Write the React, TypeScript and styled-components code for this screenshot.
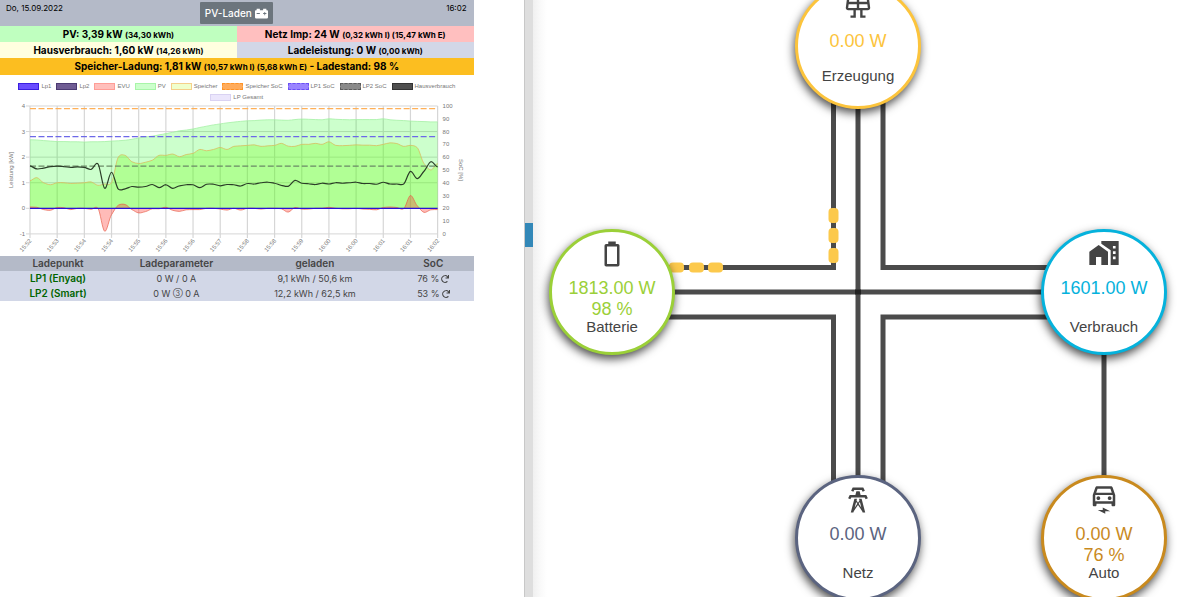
import React from 'react';
import styled, { createGlobalStyle } from 'styled-components';
import { FaCarBattery, FaRedo } from 'react-icons/fa';

const GlobalStyle = createGlobalStyle`
  *, *::before, *::after { box-sizing: border-box; }
  body { margin: 0; background: #fff; }
`;

/* ---------- page ---------- */

const Page = styled.div`
  display: flex;
  height: 100vh;
  overflow: hidden;
  color: #000;
  font-family: Inter, 'Liberation Sans', sans-serif;
`;

const LeftPane = styled.main`
  flex: 0 0 43.75%;
  padding-right: 4.2%;
  border-right: 1px solid #c8c8c8;
`;

const Divider = styled.div`
  flex: 0 0 8px;
  display: flex;
  flex-direction: column;
  padding-top: 223px;
  background: #dedede;
`;

const DragHandle = styled.button`
  height: 24px;
  width: 100%;
  padding: 0;
  border: 0;
  background: #3388b8;
  cursor: col-resize;
`;

const RightPane = styled.section`
  flex: 1 1 0;
  min-width: 0;
  overflow: hidden;
  padding-right: 17px;
  background: linear-gradient(to right, #f0f0f0, #fafafa 8px, #fff 14px);
  font-family: 'Liberation Sans', Arial, sans-serif;
`;

/* ---------- status header ---------- */

const TopBar = styled.header`
  display: grid;
  grid-template-columns: 1fr auto 1fr;
  height: 26px;
  padding: 2px 7px 0 6px;
  background: #b4bac8;
  font-size: 8px;
  line-height: 13px;
`;

const Clock = styled.time`
  text-align: right;
`;

const ModeButton = styled.button`
  display: flex;
  align-items: center;
  gap: 3px;
  height: 22px;
  padding: 0 5px;
  border: 0;
  border-radius: 1px;
  background: #6c757d;
  color: #fff;
  font: 500 10px Inter, 'Liberation Sans', sans-serif;
`;

const Stats = styled.div`
  display: grid;
  grid-template-columns: 1fr 1fr;
`;

const Stat = styled.div<{ $bg: string; $wide?: boolean }>`
  grid-column: ${(p) => (p.$wide ? '1 / -1' : 'auto')};
  height: ${(p) => (p.$wide ? 17 : 16)}px;
  background: ${(p) => p.$bg};
  font-size: 10px;
  font-weight: 700;
  line-height: 17px;
  text-align: center;
  white-space: nowrap;
`;

const Small = styled.span`
  font-size: 8px;
`;

/* ---------- chart ---------- */

const ChartBox = styled.section`
  padding-top: 8px;
  font-family: 'Liberation Sans', Arial, sans-serif;
`;

const Legend = styled.ul`
  display: flex;
  flex-wrap: wrap;
  justify-content: center;
  gap: 4px 5px;
  margin: 0;
  padding: 0 16px;
  list-style: none;
  color: #777;
  font-size: 6px;
  line-height: 7px;
`;

const LegendItem = styled.li`
  display: flex;
  gap: 2px;
`;

const Swatch = styled.span<{ $fill: string; $line: string; $dashed?: boolean }>`
  width: 21px;
  height: 7px;
  border: 1px ${(p) => (p.$dashed ? 'dashed' : 'solid')} ${(p) => p.$line};
  background: ${(p) => p.$fill};
`;

const Plot = styled.svg`
  display: block;
  width: 100%;
  height: auto;
`;

const legend = [
  { label: 'Lp1', fill: '#6a4dff', line: '#3a1fe0' },
  { label: 'Lp2', fill: '#6f5c93', line: '#4b3a72' },
  { label: 'EVU', fill: '#ffbfbb', line: '#ff9d96' },
  { label: 'PV', fill: '#ccffcc', line: '#a8f5a8' },
  { label: 'Speicher', fill: '#f0ffcc', line: '#f5d08a' },
  { label: 'Speicher SoC', fill: '#ffac5c', line: '#ff9326', dashed: true },
  { label: 'LP1 SoC', fill: '#9a84ff', line: '#6a50f5', dashed: true },
  { label: 'LP2 SoC', fill: '#8a8a8a', line: '#5c5c5c', dashed: true },
  { label: 'Hausverbrauch', fill: '#4f4f4f', line: '#333' },
  { label: 'LP Gesamt', fill: '#ebe6fc', line: '#d9d2f2' },
];

const times = [
  '15:52', '15:53', '15:54', '15:54', '15:55', '15:56', '15:56', '15:57',
  '15:58', '15:58', '15:59', '16:00', '16:00', '16:01', '16:01', '16:02',
];

const house = [
  1.66, 1.54, 1.57, 1.63, 1.65, 1.63, 1.6, 1.62, 1.6, 1.52, 1.74, 0.78, 1.41, 0.75, 0.76, 0.85,
  0.83, 0.85, 0.93, 0.81, 0.92, 0.78, 0.88, 0.92, 0.92, 0.81, 0.94, 0.94, 0.88, 0.93, 0.92, 0.87,
  0.97, 0.95, 1.0, 1.02, 0.98, 0.9, 0.86, 1.09, 0.98, 0.96, 0.93, 0.98, 0.95, 1.0, 0.98, 1.0,
  1.02, 0.97, 0.97, 0.94, 1.02, 0.95, 0.95, 0.95, 1.44, 1.16, 1.45, 1.82, 1.62,
];

const pv = [
  2.68, 2.67, 2.65, 2.63, 2.61, 2.61, 2.6, 2.6, 2.59, 2.6, 2.6, 2.61, 2.63, 2.64, 2.66, 2.7,
  2.75, 2.79, 2.82, 2.87, 2.92, 2.97, 3.03, 3.06, 3.1, 3.16, 3.21, 3.26, 3.3, 3.34, 3.37, 3.4,
  3.42, 3.43, 3.45, 3.46, 3.46, 3.45, 3.44, 3.47, 3.49, 3.48, 3.47, 3.46, 3.5, 3.48, 3.47, 3.46,
  3.47, 3.47, 3.47, 3.47, 3.5, 3.46, 3.44, 3.43, 3.41, 3.4, 3.39, 3.38, 3.38,
];

const storage = [
  1.08, 1.2, 1.0, 0.92, 1.0, 1.0, 0.97, 0.98, 1.0, 1.03, 0.9, 0.95, 1.0, 2.0, 2.07, 1.82,
  1.75, 1.8, 1.88, 2.07, 2.07, 2.12, 2.02, 2.1, 2.15, 2.3, 2.25, 2.3, 2.38, 2.3, 2.42, 2.44,
  2.46, 2.48, 2.42, 2.44, 2.46, 2.54, 2.43, 2.42, 2.5, 2.5, 2.54, 2.5, 2.6, 2.46, 2.45, 2.46,
  2.48, 2.47, 2.47, 2.45, 2.5, 2.56, 2.53, 2.42, 2.46, 2.37, 1.75, 1.5, 1.75,
];

const grid = [
  0.05, 0.04, -0.05, -0.08, 0.03, 0.02, -0.05, 0, 0, -0.04, 0, -0.9, -0.25, 0.12, 0.15, -0.05,
  -0.18, -0.13, -0.02, -0.02, 0.04, -0.08, -0.12, -0.06, -0.05, -0.05, 0, 0, -0.03, -0.07, 0, -0.07,
  0, 0, -0.03, 0, 0, -0.02, -0.15, 0.03, -0.03, -0.03, 0, 0, 0.04, 0, -0.02, -0.02,
  0, -0.03, -0.04, -0.06, 0.03, 0.05, 0.03, -0.02, 0.5, 0.1, -0.16, -0.06, -0.05,
];

const LEFT = 30;
const RIGHT = 438;
const TOP = 5;
const UNIT = 25.6;
const BOTTOM = TOP + 5 * UNIT;
const xAt = (i: number) => LEFT + (i * (RIGHT - LEFT)) / 60;
const yAt = (kw: number) => TOP + (4 - kw) * UNIT;
const ySoc = (soc: number) => BOTTOM - (soc / 100) * 5 * UNIT;

function curve(values: number[]): string {
  const at = (i: number) => values[Math.max(0, Math.min(values.length - 1, i))];
  let d = `M${xAt(0)},${yAt(values[0]).toFixed(1)}`;
  for (let i = 0; i < values.length - 1; i++) {
    const step = xAt(i + 1) - xAt(i);
    const c1 = at(i) + (at(i + 1) - at(i - 1)) / 8;
    const c2 = at(i + 1) - (at(i + 2) - at(i)) / 8;
    d += `C${(xAt(i) + step / 3).toFixed(1)},${yAt(c1).toFixed(1)} ${(xAt(i + 1) - step / 3).toFixed(1)},${yAt(c2).toFixed(1)} ${xAt(i + 1).toFixed(1)},${yAt(at(i + 1)).toFixed(1)}`;
  }
  return d;
}

const area = (values: number[]) => `${curve(values)}L${RIGHT},${yAt(0)}L${LEFT},${yAt(0)}Z`;

function PowerChart() {
  return (
    <ChartBox aria-label="Leistungsverlauf">
      <Legend>
        {legend.map((l) => (
          <LegendItem key={l.label}>
            <Swatch $fill={l.fill} $line={l.line} $dashed={l.dashed} />
            {l.label}
          </LegendItem>
        ))}
      </Legend>
      <Plot viewBox="0 0 474 155" fontSize="6" fill="#777">
        <g stroke="#d6d6d6" strokeWidth="1">
          {[4, 3, 2, 1, 0, -1].map((v) => (
            <line key={v} x1={LEFT - 4} x2={RIGHT} y1={yAt(v)} y2={yAt(v)} />
          ))}
          {times.map((_, i) => (
            <line key={i} x1={xAt(i * 4)} x2={xAt(i * 4)} y1={TOP} y2={BOTTOM + 4} strokeWidth="1.2" />
          ))}
        </g>
        <path d={area(pv)} fill="rgba(0,255,0,0.2)" />
        <path d={curve(pv)} fill="none" stroke="#a5f0a5" strokeWidth="0.8" />
        <path d={area(storage)} fill="rgba(121,255,34,0.32)" />
        <path d={curve(storage)} fill="none" stroke="#d9bd5f" strokeWidth="0.8" />
        <path d={area(grid)} fill="rgba(255,50,40,0.33)" />
        <path d={curve(grid)} fill="none" stroke="#e8604c" strokeWidth="0.7" />
        <g strokeWidth="1.2" strokeDasharray="6 2.5">
          <line x1={LEFT} x2={RIGHT} y1={ySoc(98)} y2={ySoc(98)} stroke="#ffb057" />
          <line x1={LEFT} x2={RIGHT} y1={ySoc(76)} y2={ySoc(76)} stroke="#6d68e8" />
          <line x1={LEFT} x2={RIGHT} y1={ySoc(53)} y2={ySoc(53)} stroke="#6b8a66" />
        </g>
        <path d={curve(house)} fill="none" stroke="#2b3d28" strokeWidth="1.2" />
        <line x1={LEFT} x2={RIGHT} y1={yAt(0)} y2={yAt(0)} stroke="#2a12d6" strokeWidth="1.3" />
        <g textAnchor="end">
          {[4, 3, 2, 1, 0, -1].map((v) => (
            <text key={v} x={LEFT - 5} y={yAt(v) + 2}>{v}</text>
          ))}
          {times.map((t, i) => (
            <text key={i} transform={`translate(${xAt(i * 4) + 2} ${BOTTOM + 7}) rotate(-50)`}>{t}</text>
          ))}
        </g>
        {[0, 10, 20, 30, 40, 50, 60, 70, 80, 90, 100].map((v) => (
          <text key={v} x={RIGHT + 5} y={ySoc(v) + 2}>{v}</text>
        ))}
        <g textAnchor="middle">
          <text transform="translate(13 69) rotate(-90)">Leistung [kW]</text>
          <text transform="translate(459 69) rotate(90)">SoC [%]</text>
        </g>
      </Plot>
    </ChartBox>
  );
}

/* ---------- charge point table ---------- */

const ChargeTable = styled.table`
  width: 100%;
  table-layout: fixed;
  border-collapse: collapse;
  background: #d2d7e7;
  color: #444;
  font-size: 9px;
  line-height: 15px;
  text-align: center;
`;

const HeadRow = styled.tr`
  background: #b4bac8;
`;

const Cell = styled.td`
  height: 15px;
  padding: 0;
  white-space: nowrap;
`;

const HeadCell = styled.th`
  height: 15px;
  padding: 0;
  font-size: 10px;
  font-weight: 600;
  white-space: nowrap;
`;

const NameCell = styled(HeadCell)`
  color: #006400;
`;

const Phases = styled.span`
  font-size: 7px;
  line-height: 9px;
  vertical-align: 1px;
`;

const RefreshButton = styled.button`
  margin: 0 0 0 2px;
  padding: 0;
  border: 0;
  background: none;
  color: #444;
  font-size: 8px;
  line-height: 8px;
  vertical-align: -1px;
`;

const chargePoints = [
  { name: 'LP1 (Enyaq)', params: '0 W / 0 A', loaded: '9,1 kWh / 50,6 km', soc: '76 %' },
  {
    name: 'LP2 (Smart)',
    params: <>0 W <Phases>③</Phases> 0 A</>,
    loaded: '12,2 kWh / 62,5 km',
    soc: '53 %',
  },
];

/* ---------- energy flow diagram ---------- */

const Flow = styled.div`
  position: relative;
  width: 618px;
  height: 618px;
  margin: -17px auto 0;
`;

const FlowLines = styled.svg`
  display: block;
  width: 618px;
  height: 618px;
`;

const Node = styled.article<{ $x: number; $y: number; $color: string }>`
  position: absolute;
  left: ${(p) => p.$x}px;
  top: ${(p) => p.$y}px;
  display: flex;
  flex-direction: column;
  align-items: center;
  width: 126px;
  height: 126px;
  padding-top: 7px;
  border: 3px solid ${(p) => p.$color};
  border-radius: 50%;
  background: #fff;
  box-shadow: -1px 4px 10px rgba(0, 0, 0, 0.7);
  color: #444;
`;

const Values = styled.div<{ $color: string; $compact?: boolean }>`
  height: ${(p) => (p.$compact ? 36 : 40)}px;
  margin-top: ${(p) => (p.$compact ? 8 : 9)}px;
  color: ${(p) => p.$color};
  font-size: 18px;
  line-height: 21px;
  text-align: center;
`;

const NodeName = styled.div`
  font-size: 15px;
  line-height: 17px;
`;

const NodeIcon = styled.svg`
  display: block;
  flex: none;
  width: 30px;
  height: 30px;
  fill: currentColor;
`;

const SolarIcon = () => (
  <NodeIcon viewBox="0 0 24 24">
    <path
      d="M4.400 2.500h15.200l1.200 9.300a1 1 0 0 1-1 1.100H4.200a1 1 0 0 1-1-1.100zM12 2.500V13M3.500 8h17M9.300 13v5.900H6M14.700 13v5.900H18"
      fill="none"
      stroke="currentColor"
      strokeWidth="1.900"
    />
  </NodeIcon>
);

const BatteryIcon = () => (
  <NodeIcon viewBox="0 0 24 24">
    <path d="M16,20H8V6H16M16.67,4H15V2H9V4H7.33A1.33,1.33 0 0,0 6,5.33V20.67C6,21.4 6.6,22 7.33,22H16.67A1.33,1.33 0 0,0 18,20.67V5.33C18,4.6 17.4,4 16.67,4Z" />
  </NodeIcon>
);

const HomeIcon = () => (
  <NodeIcon viewBox="0.75 1.5 22.5 22.5" fillRule="evenodd">
    <path d="M1 11v10h5v-6h4v6h5V11L8 6z" />
    <path d="M10 3v1.970l7 5V21h6V3zM18.700 6.700h2v2h-2zM18.700 10.700h2v2h-2zM18.700 14.700h2v2h-2z" />
  </NodeIcon>
);

const TowerIcon = () => (
  <NodeIcon viewBox="0 0 24 24">
    <path d="M8.28,5.45L6.5,4.55L7.76,2H16.23L17.5,4.55L15.72,5.44L15,4H9L8.28,5.45M18.62,8H14.09L13.3,5H10.7L9.91,8H5.38L4.1,10.55L5.89,11.44L6.62,10H17.38L18.1,11.45L19.89,10.56L18.62,8M17.77,22H15.7L15.46,21.1L12,15.9L8.53,21.1L8.3,22H6.23L9.12,11H11.19L10.83,12.35L12,14.1L13.16,12.35L12.81,11H14.88L17.77,22M11.4,15L10.5,13.65L9.32,18.13L11.4,15M14.68,18.12L13.5,13.64L12.6,15L14.68,18.12Z" />
  </NodeIcon>
);

const CarIcon = () => (
  <NodeIcon viewBox="0 0 24 24">
    <path d="M18.92 2C18.72 1.42 18.16 1 17.5 1H6.5C5.84 1 5.29 1.42 5.08 2L3 8V16C3 16.55 3.45 17 4 17H5C5.55 17 6 16.55 6 16V15H18V16C18 16.55 18.45 17 19 17H20C20.55 17 21 16.55 21 16V8L18.92 2M6.85 3H17.14L18.22 6.11H5.77L6.85 3M19 13H5V8H19V13M7.5 9C8.33 9 9 9.67 9 10.5S8.33 12 7.5 12 6 11.33 6 10.5 6.67 9 7.5 9M16.5 9C17.33 9 18 9.67 18 10.5S17.33 12 16.5 12C15.67 12 15 11.33 15 10.5S15.67 9 16.5 9M7 20H11V18L17 21H13V23L7 20Z" />
  </NodeIcon>
);

const nodes = [
  { name: 'Erzeugung', x: 246, y: 0, color: '#fcc43c', values: ['0.00 W'], Icon: SolarIcon, compact: true },
  { name: 'Batterie', x: 0, y: 246, color: '#9bd038', values: ['1813.00 W', '98 %'], Icon: BatteryIcon },
  { name: 'Verbrauch', x: 492, y: 246, color: '#05b2dc', values: ['1601.00 W'], Icon: HomeIcon },
  { name: 'Netz', x: 246, y: 492, color: '#5b6480', values: ['0.00 W'], Icon: TowerIcon },
  { name: 'Auto', x: 492, y: 492, color: '#c98a1e', values: ['0.00 W', '76 %'], Icon: CarIcon },
];

function EnergyFlow() {
  return (
    <Flow>
      <FlowLines viewBox="0 0 618 618" fill="none">
        <g stroke="#4b4b4b" strokeWidth="5">
          <path d="M63 284.500H284.500V63" />
          <path d="M555 284.500H334V63" />
          <path d="M63 334H284.500V555" />
          <path d="M555 334H334V555" />
          <path d="M63 309H555M309 63V555M555 309V555" />
        </g>
        <path d="M306 309h6" stroke="#222" strokeWidth="5" />
        <g fill="#fcc94c">
          {[120, 140, 159].map((x) => (
            <rect key={x} x={x} y="279.500" width="15" height="10" rx="4" />
          ))}
          {[225, 245, 265].map((y) => (
            <rect key={y} x="279.500" y={y} width="10" height="15" rx="4" />
          ))}
        </g>
      </FlowLines>
      {nodes.map(({ name, x, y, color, values, Icon, compact }) => (
        <Node key={name} $x={x} $y={y} $color={color}>
          <Icon />
          <Values $color={color} $compact={compact}>
            {values.map((v) => (
              <div key={v}>{v}</div>
            ))}
          </Values>
          <NodeName>{name}</NodeName>
        </Node>
      ))}
    </Flow>
  );
}

export default function App() {
  return (
    <Page>
      <GlobalStyle />
      <LeftPane>
        <TopBar>
          <time>Do, 15.09.2022</time>
          <ModeButton type="button">
            PV-Laden <FaCarBattery size={13} />
          </ModeButton>
          <Clock>16:02</Clock>
        </TopBar>
        <Stats>
          <Stat $bg="#bfffbf">PV: 3,39 kW <Small>(34,30 kWh)</Small></Stat>
          <Stat $bg="#ffbfbf">Netz Imp: 24 W <Small>(0,32 kWh I) (15,47 kWh E)</Small></Stat>
          <Stat $bg="#ffffdf">Hausverbrauch: 1,60 kW <Small>(14,26 kWh)</Small></Stat>
          <Stat $bg="#d2d7e7">Ladeleistung: 0 W <Small>(0,00 kWh)</Small></Stat>
          <Stat $bg="#fcbe20" $wide>
            Speicher-Ladung: 1,81 kW <Small>(10,57 kWh I) (5,68 kWh E)</Small> - Ladestand: 98 %
          </Stat>
        </Stats>
        <PowerChart />
        <ChargeTable>
          <colgroup>
            <col width="24.5%" />
            <col width="25.5%" />
            <col width="33%" />
            <col width="17%" />
          </colgroup>
          <thead>
            <HeadRow>
              <HeadCell>Ladepunkt</HeadCell>
              <HeadCell>Ladeparameter</HeadCell>
              <HeadCell>geladen</HeadCell>
              <HeadCell>SoC</HeadCell>
            </HeadRow>
          </thead>
          <tbody>
            {chargePoints.map((c) => (
              <tr key={c.name}>
                <NameCell>{c.name}</NameCell>
                <Cell>{c.params}</Cell>
                <Cell>{c.loaded}</Cell>
                <Cell>
                  {c.soc}
                  <RefreshButton type="button" aria-label={`SoC ${c.name} aktualisieren`}>
                    <FaRedo />
                  </RefreshButton>
                </Cell>
              </tr>
            ))}
          </tbody>
        </ChargeTable>
      </LeftPane>
      <Divider>
        <DragHandle type="button" aria-label="Bereich verschieben" />
      </Divider>
      <RightPane>
        <EnergyFlow />
      </RightPane>
    </Page>
  );
}
